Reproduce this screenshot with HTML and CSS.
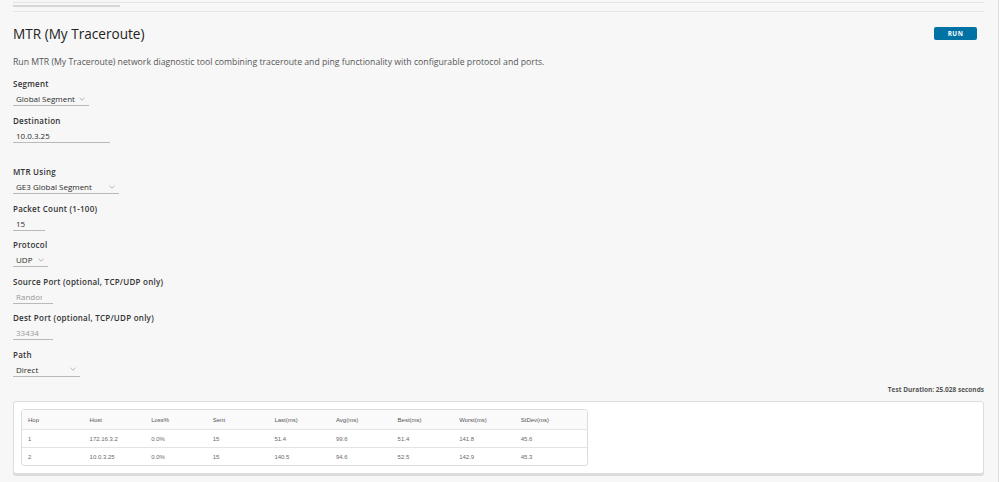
FILE: index.html
```html
<!DOCTYPE html>
<html>
<head>
    <title>MTR (My Traceroute)</title>
    <link rel="stylesheet" href="styles.css">
</head>
<body>
<div class="page">
    <!-- tail end of the panel above, scrolled mostly out of view -->
    <div class="prev-panel"><div class="prev-bar"></div></div>

    <div class="tool-head">
        <h1>MTR (My Traceroute)</h1>
        <button class="btn-run" type="button">RUN</button>
    </div>
    <p class="tool-desc">Run MTR (My Traceroute) network diagnostic tool combining traceroute and ping functionality with configurable protocol and ports.</p>

    <form class="mtr-form">
        <div class="field">
            <label>Segment</label>
            <div class="select w-segment"><span>Global Segment</span><svg viewBox="0 0 6 4"><polyline points="0.5,0.8 3,3.2 5.5,0.8"/></svg></div>
        </div>
        <div class="field">
            <label>Destination</label>
            <input class="text-input w-dest" type="text" value="10.0.3.25">
        </div>
        <div class="field spaced">
            <label>MTR Using</label>
            <div class="select w-using"><span>GE3 Global Segment</span><svg viewBox="0 0 6 4"><polyline points="0.5,0.8 3,3.2 5.5,0.8"/></svg></div>
        </div>
        <div class="field">
            <label>Packet Count (1-100)</label>
            <input class="text-input w-count" type="text" value="15">
        </div>
        <div class="field">
            <label>Protocol</label>
            <div class="select w-proto"><span>UDP</span><svg viewBox="0 0 6 4"><polyline points="0.5,0.8 3,3.2 5.5,0.8"/></svg></div>
        </div>
        <div class="field">
            <label>Source Port (optional, TCP/UDP only)</label>
            <input class="text-input w-port" type="text" placeholder="Random">
        </div>
        <div class="field">
            <label>Dest Port (optional, TCP/UDP only)</label>
            <input class="text-input w-port" type="text" placeholder="33434">
        </div>
        <div class="field">
            <label>Path</label>
            <div class="select w-path"><span>Direct</span><svg viewBox="0 0 6 4"><polyline points="0.5,0.8 3,3.2 5.5,0.8"/></svg></div>
        </div>
    </form>

    <div class="duration">Test Duration: 25.028 seconds</div>

    <div class="result-card">
        <table class="hops">
            <thead>
                <tr>
                    <th>Hop</th><th>Host</th><th>Loss%</th><th>Sent</th><th>Last(ms)</th>
                    <th>Avg(ms)</th><th>Best(ms)</th><th>Worst(ms)</th><th>StDev(ms)</th>
                </tr>
            </thead>
            <tbody>
                <tr>
                    <td>1</td><td>172.16.3.2</td><td>0.0%</td><td>15</td><td>51.4</td>
                    <td>99.6</td><td>51.4</td><td>141.8</td><td>45.6</td>
                </tr>
                <tr>
                    <td>2</td><td>10.0.3.25</td><td>0.0%</td><td>15</td><td>140.5</td>
                    <td>94.6</td><td>52.5</td><td>142.9</td><td>45.3</td>
                </tr>
            </tbody>
        </table>
    </div>
</div>
</body>
</html>
```

FILE: styles.css
```css
:root {
    --page-bg: #f7f7f7;
    --text-color: #333333;
    --muted-text: #565656;
    --placeholder: #9a9a9a;
    --line-color: #b9b9b9;
    --border-color: #dddddd;
    --primary: #0072a3;
}

body {
    margin: 0;
    background-color: var(--page-bg);
    font-family: "Open Sans", "Noto Sans", sans-serif;
    color: var(--text-color);
}

.page {
    min-height: 100vh;
    box-sizing: border-box;
    padding: 2px 14px 8px 13px;
    border-right: 1px solid #dedede;
}

.prev-panel {
    height: 8px;
    border-top: 1px solid #e4e4e4;
    border-bottom: 1px solid #e6e6e6;
}

.prev-bar {
    width: 107px;
    height: 2px;
    margin-top: 2px;
    background-color: #d6d6d6;
}

.tool-head {
    display: flex;
    align-items: center;
    justify-content: space-between;
    height: 22px;
    margin-top: 10px;
}

.tool-head h1 {
    margin: 0;
    font-size: 13.6px;
    font-weight: 400;
    color: #222;
}

.btn-run {
    width: 43px;
    height: 13px;
    margin-right: 7px;
    padding: 0;
    border: none;
    border-radius: 2px;
    background-color: var(--primary);
    color: #fff;
    font-family: inherit;
    font-size: 6.4px;
    font-weight: 700;
    letter-spacing: 0.5px;
    cursor: pointer;
}

.tool-desc {
    margin: 11px 0 9px;
    font-size: 8.7px;
    line-height: 14px;
    color: var(--muted-text);
}

/* form fields: bold label over an underlined control */
.mtr-form {
    display: flex;
    flex-direction: column;
    align-items: flex-start;
}

.field {
    display: flex;
    flex-direction: column;
    margin-bottom: 8.5px;
}

.field.spaced {
    margin-top: 15px;
}

.field label {
    height: 12px;
    margin-bottom: 2px;
    font-size: 8px;
    font-weight: 600;
    line-height: 12px;
    letter-spacing: 0.25px;
    color: var(--text-color);
}

.select,
.text-input {
    box-sizing: content-box;
    height: 13px;
    border: none;
    border-bottom: 1px solid var(--line-color);
    font-family: inherit;
    font-size: 8px;
    color: #2b2b2b;
}

.select {
    display: flex;
    align-items: center;
    justify-content: space-between;
    padding: 0 4px 0 3px;
}

.select svg {
    width: 6px;
    height: 4px;
    fill: none;
    stroke: #a5a5a5;
    stroke-width: 0.8;
}

.text-input {
    padding: 0 0 0 3px;
    background: transparent;
    outline: none;
}

.text-input::placeholder {
    color: var(--placeholder);
}

.w-segment { width: 69px; }
.w-using   { width: 99px; }
.w-proto   { width: 28px; }
.w-path    { width: 60px; }
.w-dest    { width: 94px; }
.w-count   { width: 29px; }

/* port inputs cut their placeholder short before the underline ends */
.w-port {
    width: 26px;
    padding-right: 11px;
}

.duration {
    height: 10px;
    margin-bottom: 6px;
    text-align: right;
    font-size: 6.5px;
    font-weight: 700;
    line-height: 10px;
    color: var(--muted-text);
}

/* results */
.result-card {
    padding: 7px;
    background-color: #fff;
    border: 1px solid var(--border-color);
    border-radius: 3px;
    box-shadow: 0 2px 0 #dcdcdc;
}

.hops {
    width: 567px;
    table-layout: fixed;
    border-spacing: 0;
    border: 1px solid var(--border-color);
    border-radius: 3px;
    font-family: "Liberation Sans", Arial, sans-serif;
    font-size: 6px;
    color: #6a6a6a;
}

.hops th,
.hops td {
    padding: 0 0 0 6px;
    text-align: left;
    white-space: nowrap;
}

.hops th {
    width: 55.6px;
    height: 19px;
    background-color: #fafafa;
    font-weight: 400;
    color: #555;
    border-bottom: 1px solid #e4e4e4;
}

.hops th:last-child {
    width: auto;
}

.hops td {
    height: 17px;
}

.hops tbody tr:first-child td {
    border-bottom: 1px solid #e4e4e4;
}
```
